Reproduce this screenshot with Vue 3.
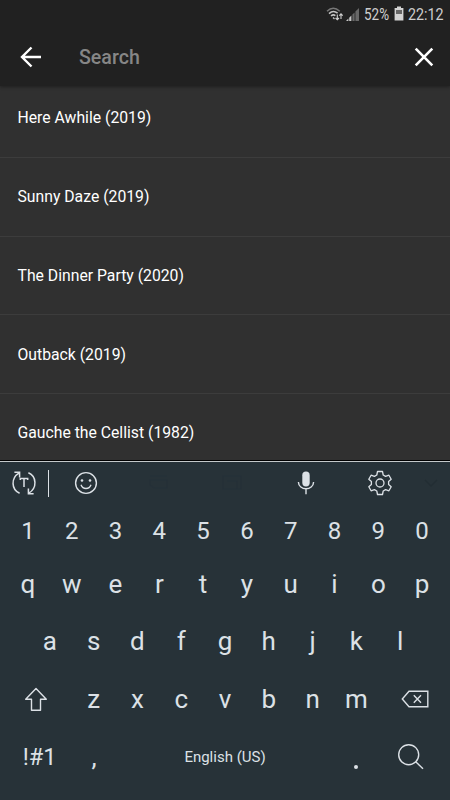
<script setup>
const films = [
  'Here Awhile (2019)',
  'Sunny Daze (2019)',
  'The Dinner Party (2020)',
  'Outback (2019)',
  'Gauche the Cellist (1982)',
]
const digits = [...'1234567890']
const top = [...'qwertyuiop']
const home = [...'asdfghjkl']
const bottom = [...'zxcvbnm']
</script>

<template>
  <div class="screen">
    <header class="header">
      <div class="status">
        <svg class="wifi" width="17" height="16" viewBox="0 0 17 16" fill="none">
          <path d="M1 5.2Q7.2-.8 13.8 5.2" stroke="#777" stroke-width="1.5" />
          <path d="M3 7.6Q7.2 3.6 11.6 7.2M5 10Q7.2 8 9.4 9.6" stroke="#c4c4c4" stroke-width="1.5" />
          <path d="M7 11.5l1.5 1.5" stroke="#c4c4c4" stroke-width="1.3" />
          <path d="M11.3 8.5v5M9.6 12l1.7 1.8L13 12M15 13V8M13.3 9.7L15 7.8l1.7 1.9" stroke="#d0d0d0" stroke-width="1.1" />
        </svg>
        <svg class="signal" width="14" height="15" viewBox="0 0 14 15">
          <path d="M0 14l2.4-2.4V14zM3.2 10.8L5.4 8.6V14H3.2z" fill="#c8c8c8" />
          <path d="M6.4 7.6l2.2-2.2V14H6.4zM9.4 4.6L13 1v13H9.4z" fill="#686868" />
        </svg>
        <svg class="percent" width="26" height="24" viewBox="0 0 26 24">
          <text x="0" y="18" textLength="25" lengthAdjust="spacingAndGlyphs">52%</text>
        </svg>
        <svg class="battery" width="10" height="16" viewBox="0 0 10 16">
          <path d="M3 .5h4v1.6h2.4v12.4H.6V2.1H3z" fill="#d3d3d3" />
          <path d="M2 4h6v4H2z" fill="#666" />
        </svg>
        <svg class="clock" width="37" height="24" viewBox="0 0 37 24">
          <text x="0" y="18" textLength="35.5" lengthAdjust="spacingAndGlyphs">22:12</text>
        </svg>
      </div>
      <div class="searchbar">
        <svg class="back" width="22" height="22" viewBox="0 0 22 22" fill="none" stroke="#fff" stroke-width="2.4">
          <path d="M21 11H2.2M11.5 1.5L2 11l9.5 9.5" />
        </svg>
        <span class="placeholder">Search</span>
        <svg width="20" height="20" viewBox="0 0 20 20" fill="none" stroke="#fff" stroke-width="2.6">
          <path d="M1.7 1.7l16.6 16.6M18.3 1.7L1.7 18.3" />
        </svg>
      </div>
    </header>

    <ul class="films">
      <li v-for="film in films" :key="film">{{ film }}</li>
    </ul>

    <section class="keyboard">
      <div class="tools">
        <svg class="translate" width="26" height="26" viewBox="0 0 26 26" fill="none" stroke="#dce1e6" stroke-width="1.5">
          <path d="M8.6 23.2C.3 19.6-.4 8.1 8.2 2.8M3.4 2.3h5.2v5.2M17.4 2.8c8.3 3.6 9 15.1.4 20.4M22.6 23.7h-5.2v-5.2" />
          <path d="M9.3 10V8.5h7.4V10M13 8.5V17" />
        </svg>
        <i class="separator"></i>
        <svg class="smiley" width="24" height="24" viewBox="0 0 24 24" fill="none" stroke="#dce1e6" stroke-width="1.4">
          <circle cx="12" cy="12" r="10.4" />
          <path d="M7 13.8c1.8 5 8.2 5 10 0" />
          <circle cx="8" cy="9.5" r="1.3" fill="#dce1e6" stroke="none" />
          <circle cx="16" cy="9.5" r="1.3" fill="#dce1e6" stroke="none" />
        </svg>
        <svg class="ghosts" width="100" height="22" viewBox="0 0 100 22" fill="none" stroke="#253038" stroke-width="1.2">
          <path d="M3 4h17M3 8h17v8H7l-4-3zM76 4h18v13H76zM80 9h10v8" />
        </svg>
        <svg class="mic" width="18" height="26" viewBox="0 0 18 26" fill="none" stroke="#dce1e6" stroke-width="1.4">
          <rect x="5.3" y="1.5" width="7.4" height="15" rx="3.7" fill="#dce1e6" stroke="none" />
          <path d="M1.4 12c.2 9 15 9 15.2 0M9 18.8v5.5" />
        </svg>
        <svg class="gear" width="24" height="26" viewBox="0 0 24 26" fill="none" stroke="#dce1e6" stroke-width="1.3" stroke-linejoin="round">
          <path d="M9.5 1.5h5l.7 3.5 2.4 1.4 3.3-1.2 2.3 4.1-2.6 2.3v2.8l2.6 2.3-2.3 4.1-3.3-1.2-2.4 1.4-.7 3.5h-5L8.8 21l-2.4-1.4-3.3 1.2-2.3-4.1 2.6-2.3v-2.8L.8 9.3l2.3-4.1 3.3 1.2L8.8 5z" />
          <circle cx="12" cy="13" r="4" />
        </svg>
        <svg class="chevron" width="14" height="10" viewBox="0 0 14 10" fill="none" stroke="#222d33" stroke-width="1.3">
          <path d="M1 2l6 6 6-6" />
        </svg>
      </div>
      <div class="keys digits"><span v-for="k in digits" :key="k">{{ k }}</span></div>
      <div class="keys top"><span v-for="k in top" :key="k">{{ k }}</span></div>
      <div class="keys home"><span v-for="k in home" :key="k">{{ k }}</span></div>
      <div class="keys bottom">
        <svg class="shift" width="24" height="25" viewBox="0 0 24 25" fill="none" stroke="#dce1e6" stroke-width="1.4" stroke-linejoin="round">
          <path d="M12 1.5L1.7 12.3h5.8v10.9h9V12.3h5.8z" />
        </svg>
        <span v-for="k in bottom" :key="k">{{ k }}</span>
        <svg class="erase" width="28" height="18" viewBox="0 0 28 18" fill="none" stroke="#dce1e6" stroke-width="1.4">
          <path d="M8 1.2h18.8v15.6H8L1.3 9zM12.8 5.3l7.2 7.4M20 5.3l-7.2 7.4" />
        </svg>
      </div>
      <div class="keys actions">
        <span class="symbols">!#1</span>
        <span>,</span>
        <span class="language">English (US)</span>
        <span class="period"><i></i></span>
        <svg class="find" width="28" height="28" viewBox="0 0 28 28" fill="none" stroke="#dce1e6" stroke-width="1.4">
          <circle cx="11.7" cy="11.7" r="10" />
          <path d="M18.7 18.7l7.3 7.1" />
        </svg>
      </div>
    </section>
  </div>
</template>

<style>
body {
  margin: 0;
  background: #303030;
}
</style>

<style scoped>
.screen {
  width: 450px;
  height: 800px;
  overflow: hidden;
  display: flex;
  flex-direction: column;
  background: #303030;
  color: #fff;
  font-family: Roboto, sans-serif;
}
svg {
  display: block;
  flex: none;
  overflow: visible;
}
.header {
  flex: none;
  height: 86px;
  background: #212121;
  box-shadow: 0 1px 3px rgba(0, 0, 0, 0.35);
}
.status {
  height: 28px;
  display: flex;
  align-items: center;
  padding-left: 326px;
}
.status text {
  font-size: 16.5px;
  fill: #cecece;
}
.signal {
  margin-left: 3px;
}
.percent {
  margin-left: 4px;
}
.battery {
  margin-left: 4px;
}
.clock {
  margin-left: 4px;
}
.searchbar {
  height: 58px;
  display: flex;
  align-items: center;
  padding: 0 16px 0 20px;
}
.placeholder {
  flex: 1;
  margin-left: 37px;
  font-size: 19.6px;
  font-weight: 500;
  color: #868686;
}
.films {
  height: 374px;
  flex: none;
  overflow: hidden;
  margin: 0;
  padding: 0;
  list-style: none;
}
.films li {
  box-sizing: border-box;
  height: 78.75px;
  padding: 0 17.5px;
  display: flex;
  align-items: center;
  border-bottom: 1px solid #3c3c3c;
  font-size: 15.75px;
}
.films li:first-child {
  height: 71.75px;
  padding-bottom: 7px;
}
.keyboard {
  flex: 1;
  box-sizing: border-box;
  border-top: 1px solid #000;
  box-shadow: inset 0 1px #c4c8ca;
  background: #273238;
  color: #dce1e6;
}
.tools {
  height: 44px;
  display: flex;
  align-items: center;
  padding-left: 11px;
}
.separator {
  width: 1px;
  height: 27px;
  margin-left: 11px;
  background: #dce1e6;
}
.smiley {
  margin-left: 25px;
}
.ghosts {
  margin-left: 49px;
}
.mic {
  margin-left: 50px;
}
.gear {
  margin-left: 53px;
}
.chevron {
  margin-left: 32px;
}
.keys {
  display: grid;
  padding: 0 6px;
  align-items: center;
  justify-items: center;
  font-size: 26px;
}
.digits {
  height: 52px;
  grid-template-columns: repeat(10, 1fr);
  font-size: 24px;
}
.top {
  height: 54px;
  grid-template-columns: repeat(10, 1fr);
}
.home {
  height: 60px;
  padding: 0 28px;
  grid-template-columns: repeat(9, 1fr);
}
.bottom {
  height: 56px;
  padding: 0;
  grid-template-columns: 71.7px repeat(7, 1fr) 71.7px;
}
.erase {
  margin-left: 1px;
}
.actions {
  height: 60px;
  padding: 0;
  grid-template-columns: 79px 30px 232px 30px 79px;
}
.symbols {
  font-size: 23.5px;
}
.language {
  font-size: 15px;
}
.period i {
  display: block;
  width: 4px;
  height: 4px;
  margin-top: 20px;
  border-radius: 50%;
  background: #dce1e6;
}
</style>
